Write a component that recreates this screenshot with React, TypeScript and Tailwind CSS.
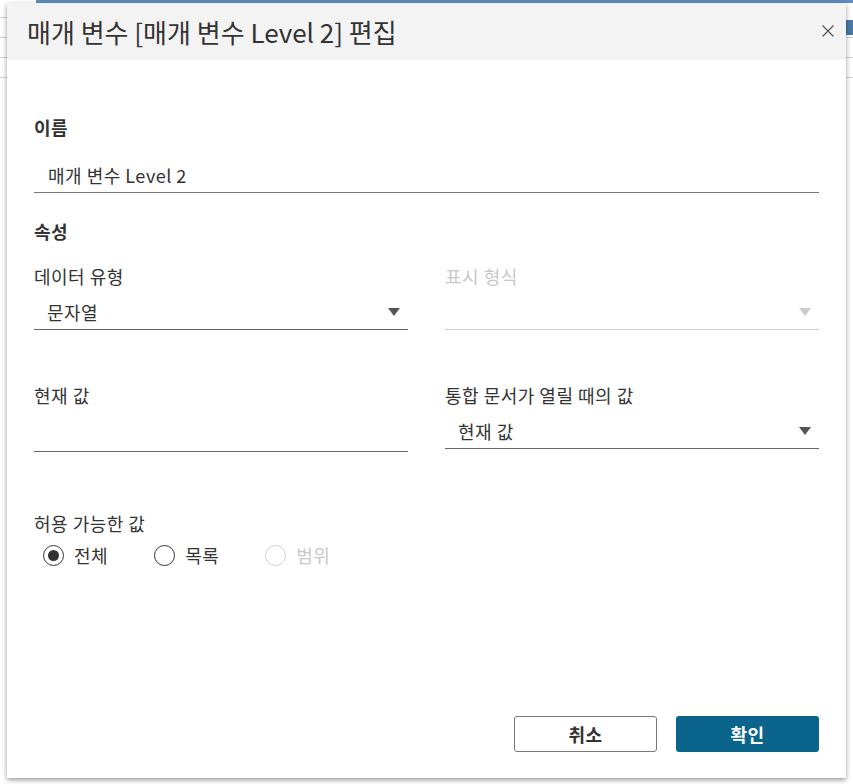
import React from "react";

const font = { fontFamily: '"Noto Sans CJK KR", "Noto Sans", sans-serif' };

function Arrow({ disabled }: { disabled?: boolean }) {
  return (
    <svg width="12" height="8" viewBox="0 0 12 8" className="shrink-0">
      <path d="M0 0 L12 0 L6 8 Z" fill={disabled ? "#cccccc" : "#555555"} />
    </svg>
  );
}

function Radio({ checked, disabled, label }: { checked?: boolean; disabled?: boolean; label: string }) {
  return (
    <div className="flex items-center gap-[10px]">
      <div
        className={`w-[21px] h-[21px] rounded-full border flex items-center justify-center ${
          disabled ? "border-[#d0d0d0]" : "border-[#333]"
        }`}
      >
        {checked && <div className="w-[11px] h-[11px] rounded-full bg-[#333]" />}
      </div>
      <span className={`text-[18px] leading-[24px] tracking-[0.5px] ${disabled ? "text-[#c8c8c8]" : "text-[#333]"}`}>{label}</span>
    </div>
  );
}

export default function App() {
  return (
    <div className="relative w-[853px] h-[784px] bg-white overflow-hidden" style={font}>
      {/* background app content */}
      <div className="absolute left-[36px] right-0 top-0 h-[3px] bg-[#5b8dbd]" />
      <div className="absolute right-0 top-[20px] w-[8px] h-[15px] bg-[#4a79a8]" />
      <div className="absolute left-0 top-[17px] w-[8px] h-px bg-[#cfcfcf]" />
      <div className="absolute left-0 top-[37px] w-[8px] h-px bg-[#cfcfcf]" />
      <div className="absolute left-0 top-[57px] w-[8px] h-px bg-[#cfcfcf]" />
      <div className="absolute left-0 top-[77px] w-[8px] h-px bg-[#cfcfcf]" />
      <div className="absolute right-0 top-[37px] w-[8px] h-px bg-[#cfcfcf]" />
      <div className="absolute right-0 top-[57px] w-[8px] h-px bg-[#cfcfcf]" />
      <div className="absolute right-0 top-[77px] w-[8px] h-px bg-[#cfcfcf]" />

      {/* dialog */}
      <div className="absolute left-[7px] top-[3px] w-[839px] h-[775px] bg-white flex flex-col shadow-[0_2px_5px_rgba(0,0,0,0.4)]">
        <div className="h-[57px] bg-[#f3f3f3] flex items-center justify-between pl-[20px] pr-[12px]">
          <span className="text-[26px] text-[#333]">매개 변수 [매개 변수 Level 2] 편집</span>
          <svg width="12" height="12" viewBox="0 0 12 12" className="mb-[2px]">
            <path d="M0.5 0.5 L11.5 11.5 M11.5 0.5 L0.5 11.5" stroke="#555" strokeWidth="1.2" />
          </svg>
        </div>

        <div className="flex-1 flex flex-col px-[27px] text-[#333] text-[18px] tracking-[0.5px]">
          <div className="mt-[55px] font-bold leading-[24px]">이름</div>
          <div className="mt-[24px] border-b border-[#777] pl-[14px] pb-[5px] leading-[24px]">
            매개 변수 Level 2
          </div>

          <div className="mt-[26px] font-bold leading-[24px]">속성</div>

          <div className="mt-[21px] grid grid-cols-2 gap-x-[37px]">
            <div className="flex flex-col">
              <div className="leading-[24px]">데이터 유형</div>
              <div className="mt-[12px] border-b border-[#666] pl-[13px] pr-[8px] pb-[5px] flex items-center justify-between">
                <span className="leading-[24px]">문자열</span>
                <Arrow />
              </div>
            </div>
            <div className="flex flex-col">
              <div className="leading-[24px] text-[#c8c8c8]">표시 형식</div>
              <div className="mt-[12px] border-b border-[#cfcfcf] pl-[13px] pr-[8px] pb-[5px] flex items-center justify-between">
                <span className="leading-[24px]">&nbsp;</span>
                <Arrow disabled />
              </div>
            </div>

            <div className="flex flex-col mt-[53px]">
              <div className="leading-[24px]">현재 값</div>
              <div className="mt-[12px] border-b border-[#666] pl-[13px] pb-[5px]">
                <span className="leading-[24px]">&nbsp;</span>
              </div>
            </div>
            <div className="flex flex-col mt-[53px]">
              <div className="leading-[24px]">통합 문서가 열릴 때의 값</div>
              <div className="mt-[12px] border-b border-[#666] pl-[13px] pr-[8px] pb-[5px] flex items-center justify-between">
                <span className="leading-[24px]">현재 값</span>
                <Arrow />
              </div>
            </div>
          </div>

          <div className="mt-[59px] leading-[24px]">허용 가능한 값</div>
          <div className="mt-[8px] pl-[9px] flex items-center gap-[46px]">
            <Radio checked label="전체" />
            <Radio label="목록" />
            <Radio disabled label="범위" />
          </div>

          <div className="flex-1" />
          <div className="flex justify-end gap-[19px] mb-[26px]">
            <button className="w-[143px] h-[36px] border border-[#777] rounded-[3px] bg-white text-[18px] font-bold text-[#333]">
              취소
            </button>
            <button className="w-[143px] h-[36px] rounded-[3px] bg-[#0a648b] text-[18px] font-bold text-white">
              확인
            </button>
          </div>
        </div>
      </div>
    </div>
  );
}
